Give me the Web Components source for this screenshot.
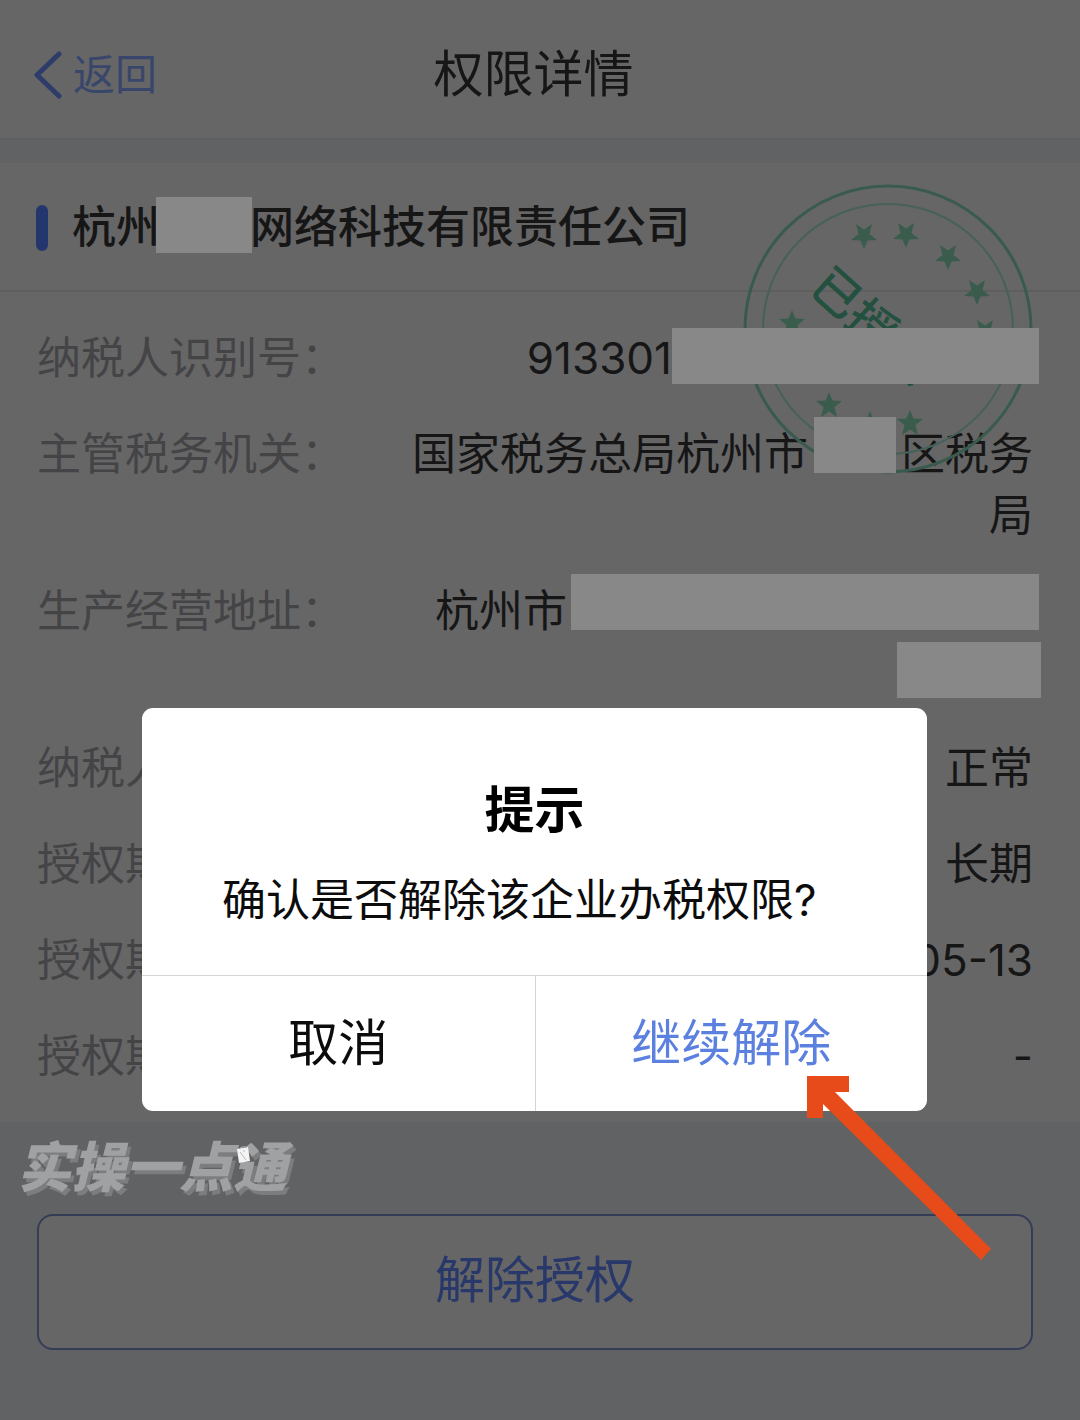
<!DOCTYPE html>
<html lang="zh-CN">
<head>
<meta charset="utf-8">
<meta name="viewport" content="width=device-width, initial-scale=1">
<title>权限详情</title>
<style>
  html { background: #616263; }
  body { margin: 0; font-family: Inter, "Noto Sans CJK SC", sans-serif; font-size: 44px; line-height: 61px; color: #161617; }
</style>
</head>
<body>
<permission-page>
  <app-bar slot="bar" back="返回">权限详情</app-bar>
  <company-card slot="card">
    <span slot="name">杭州<redact-mark style="--w:96px;--ml:-4px;--mr:-2px"></redact-mark>网络科技有限责任公司</span>
    <auth-stamp slot="stamp">已授权</auth-stamp>
    <detail-row label="纳税人识别号：">913301<redact-mark style="--w:367px;--mr:-6px"></redact-mark></detail-row>
    <detail-row label="主管税务机关：">国家税务总局杭州市<redact-mark raised style="--w:82px;--ml:6px;--mr:5px"></redact-mark>区税务局</detail-row>
    <detail-row label="生产经营地址：">杭州市<redact-mark raised style="--w:468px;--ml:4px;--mr:-6px"></redact-mark><br><redact-mark style="--w:144px;--mr:-8px"></redact-mark></detail-row>
    <detail-row label="纳税人">正常</detail-row>
    <detail-row label="授权期">长期</detail-row>
    <detail-row label="授权期">05-13</detail-row>
    <detail-row label="授权期">-</detail-row>
  </company-card>
  <brand-mark slot="footer">实操一点通</brand-mark>
  <outline-button slot="footer">解除授权</outline-button>
  <confirm-dialog slot="overlay" heading="提示" cancel="取消" confirm="继续解除">确认是否解除该企业办税权限?</confirm-dialog>
  <pointer-arrow slot="overlay"></pointer-arrow>
</permission-page>

<script>
const define = (name, render) => customElements.define(name, class extends HTMLElement {
  constructor() {
    super();
    this.attachShadow({ mode: 'open' });
  }
  connectedCallback() {
    this.shadowRoot.innerHTML = render(this);
  }
});

define('permission-page', () => `
  <style>
    :host { display: block; position: relative; min-height: 100vh; background: #616263; }
    .footer { display: flex; flex-direction: column; padding: 0 47px 70px 37px; }
  </style>
  <slot name="bar"></slot>
  <main><slot name="card"></slot></main>
  <div class="footer"><slot name="footer"></slot></div>
  <slot name="overlay"></slot>`);

define('app-bar', el => `
  <style>
    :host { display: block; background: #666; border-bottom: 2px solid #5f5f60; }
    header { display: grid; grid-template-columns: 1fr auto 1fr; align-items: center; padding: 44px 47px 33px 34px; }
    button { justify-self: start; display: flex; align-items: center; gap: 11px; padding: 0; border: 0; background: none; font: inherit; font-size: 42px; color: #39466c; }
    svg { display: block; }
    h1 { margin: 0; font-size: 50px; font-weight: 400; color: #161617; }
  </style>
  <header>
    <button type="button">
      <svg width="28" height="48" viewBox="0 0 28 48" fill="none" stroke="#2d3c69" stroke-width="5" stroke-linecap="round" stroke-linejoin="round" aria-hidden="true"><path d="M25 3 3 24l22 21"/></svg>
      <span>${el.getAttribute('back')}</span>
    </button>
    <h1><slot></slot></h1>
  </header>`);

define('company-card', () => `
  <style>
    :host { display: block; position: relative; margin-top: 23px; background: #666; }
    .head { display: flex; align-items: center; gap: 24px; padding: 34px 47px 32px 36px; border-bottom: 2px solid #5e5e5f; }
    .bar { width: 12px; height: 46px; border-radius: 6px; background: #24366e; }
    h2 { margin: 0; font: inherit; font-weight: 500; }
    .rows { display: flex; flex-direction: column; gap: 35px; padding: 36px 47px 35px 37px; }
  </style>
  <div class="head"><span class="bar"></span><h2><slot name="name"></slot></h2></div>
  <slot name="stamp"></slot>
  <div class="rows"><slot></slot></div>`);

define('detail-row', el => `
  <style>
    :host { display: flex; justify-content: space-between; gap: 60px; }
    .label { flex: none; color: #444446; }
    .value { text-align: right; }
  </style>
  <span class="label">${el.getAttribute('label')}</span>
  <span class="value"><slot></slot></span>`);

define('redact-mark', () => `
  <style>
    :host { display: inline-block; position: relative; z-index: 1; width: var(--w); height: 56px; margin: 0 var(--mr, 0) 0 var(--ml, 0); vertical-align: top; background: #888; }
    :host([raised]) { margin-top: -7px; }
  </style>`);

define('auth-stamp', () => {
  const down = [[121, 53], [163, 52], [205, 74], [234, 109], [242, 149]];
  const up = [[49, 140], [86, 222], [127, 241], [167, 240]];
  const star = 'M0-13 3.5-4.5 13-4 5.5 2 8 12 0 6.5-8 12-5.5 2-13-4-3.5-4.5Z';
  return `
  <style>
    :host { display: block; position: absolute; top: 20px; right: 47px; }
    svg { display: block; }
    text { font-family: "Noto Sans CJK SC", sans-serif; font-size: 48px; font-weight: 500; fill: #24513f; }
  </style>
  <svg width="290" height="292" viewBox="0 0 290 292">
    <circle cx="145" cy="146" r="143" fill="none" stroke="#395b4f" stroke-width="3"/>
    <circle cx="145" cy="146" r="125" fill="none" stroke="#46605a" stroke-width="2"/>
    <g fill="#3a5c4d">
      ${down.map(([x, y]) => `<path d="${star}" transform="translate(${x} ${y}) rotate(180)"/>`).join('')}
      ${up.map(([x, y]) => `<path d="${star}" transform="translate(${x} ${y})"/>`).join('')}
    </g>
    <text x="-25" y="18" transform="translate(95 110) rotate(42)">已授权</text>
  </svg>`;
});

define('brand-mark', () => `
  <style>
    :host { display: flex; align-items: center; position: relative; height: 92px; margin-left: -20px; }
    .name { font-size: 54px; font-weight: 900; font-style: italic; line-height: 54px; color: #a0a1a2; text-shadow: 3px 4px 0 #7c7d7e; }
    svg { position: absolute; left: 219px; top: 24px; }
  </style>
  <span class="name"><slot></slot></span>
  <svg width="16" height="18" viewBox="0 0 16 18" aria-hidden="true"><path d="M1 3 12 1l2 14-11 2Z" fill="#f4f4f4"/><path d="M4 2q4-3 7 0M4 6l6 8M7 5h2" fill="none" stroke="#bbb" stroke-width="1"/></svg>`);

define('outline-button', () => `
  <style>
    :host { display: block; }
    button { display: block; width: 100%; padding: 34px 0 37px; border: 2px solid #353c58; border-radius: 16px; background: #666; font: inherit; font-size: 50px; color: #28386a; }
  </style>
  <button type="button"><slot></slot></button>`);

define('confirm-dialog', el => `
  <style>
    :host { position: absolute; z-index: 2; inset: 0; display: flex; justify-content: center; align-items: flex-start; padding: 708px 153px 0 142px; }
    section { flex: 1; border-radius: 11px; background: #fff; color: #0c0c0d; overflow: hidden; }
    .body { padding: 72px 60px 44px 80px; }
    h2 { margin: 0 20px 29px 0; text-align: center; font-size: 50px; font-weight: 700; color: #000; }
    p { margin: 0; }
    .actions { display: grid; grid-template-columns: 1fr 1fr; border-top: 1px solid #d4d4d5; }
    button { padding: 37px 0; border: 0; background: none; font: inherit; font-size: 50px; color: #0c0c0d; }
    button + button { border-left: 1px solid #d4d4d5; color: #5b80df; }
  </style>
  <section role="dialog" aria-modal="true" aria-labelledby="t">
    <div class="body"><h2 id="t">${el.getAttribute('heading')}</h2><p><slot></slot></p></div>
    <div class="actions">
      <button type="button">${el.getAttribute('cancel')}</button>
      <button type="button">${el.getAttribute('confirm')}</button>
    </div>
  </section>`);

define('pointer-arrow', () => `
  <style>
    :host { position: absolute; z-index: 3; top: 1076px; right: 88px; }
    svg { display: block; }
  </style>
  <svg width="185" height="185" viewBox="0 0 185 185" aria-hidden="true"><path d="M0 0H42V16H28L184 173 174 184 16 28V42H0Z" fill="#e64b19"/></svg>`);
</script>
</body>
</html>
